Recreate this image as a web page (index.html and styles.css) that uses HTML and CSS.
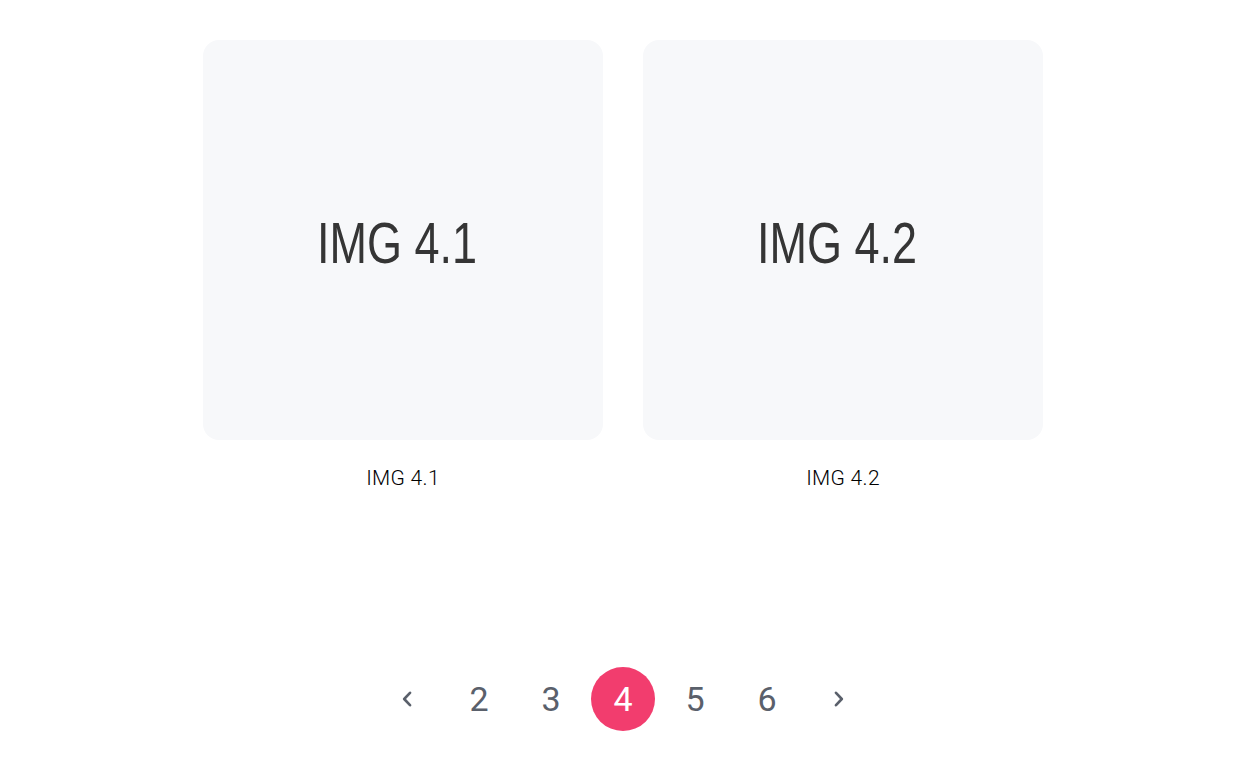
FILE: index.html
```html
<!DOCTYPE html>
<html lang="en">
<head>
<meta charset="utf-8">
<title>Gallery</title>
<link rel="stylesheet" href="styles.css">
</head>
<body>
<main class="page">
  <section class="gallery">
    <figure class="item">
      <div class="thumb"><span class="thumb-label">IMG 4.1</span></div>
      <figcaption class="caption">IMG 4.1</figcaption>
    </figure>
    <figure class="item">
      <div class="thumb"><span class="thumb-label">IMG 4.2</span></div>
      <figcaption class="caption">IMG 4.2</figcaption>
    </figure>
  </section>
  <nav class="pager">
    <button class="page-btn arrow" aria-label="Previous">
      <svg width="10" height="16" viewBox="0 0 10 16"><polyline points="8,1.8 2.2,8 8,14.2" fill="none" stroke="currentColor" stroke-width="2.6" stroke-linecap="round" stroke-linejoin="round"/></svg>
    </button>
    <button class="page-btn">2</button>
    <button class="page-btn">3</button>
    <button class="page-btn active">4</button>
    <button class="page-btn">5</button>
    <button class="page-btn">6</button>
    <button class="page-btn arrow" aria-label="Next">
      <svg width="10" height="16" viewBox="0 0 10 16"><polyline points="2,1.8 7.8,8 2,14.2" fill="none" stroke="currentColor" stroke-width="2.6" stroke-linecap="round" stroke-linejoin="round"/></svg>
    </button>
  </nav>
</main>
</body>
</html>
```
FILE: styles.css
```css
html, body {
  margin: 0;
  padding: 0;
  background: #ffffff;
}
body {
  font-family: Roboto, "Noto Sans", sans-serif;
  color: #111;
}
.page {
  display: flex;
  flex-direction: column;
  align-items: center;
  padding-top: 40px;
}
.gallery {
  display: flex;
  gap: 40px;
  justify-content: center;
}
.item {
  margin: 0;
  display: flex;
  flex-direction: column;
  align-items: center;
}
.thumb {
  width: 400px;
  height: 400px;
  border-radius: 16px;
  background: #f7f8fa;
  display: flex;
  align-items: center;
  justify-content: center;
}
.thumb-label {
  font-family: "Liberation Sans", Arial, sans-serif;
  font-size: 45px;
  line-height: 1;
  color: #353535;
  transform: translate(-6px, 3px) scaleY(1.28);
  filter: blur(0.4px);
  white-space: nowrap;
}
.caption {
  margin-top: 26px;
  font-size: 21px;
  line-height: 24px;
  font-weight: 300;
  letter-spacing: 0.3px;
  color: #000;
}
.pager {
  margin-top: 177px;
  display: flex;
  gap: 8px;
  align-items: center;
}
.page-btn {
  width: 64px;
  height: 64px;
  border: none;
  border-radius: 50%;
  background: transparent;
  font-family: Roboto, sans-serif;
  font-size: 34px;
  font-weight: 400;
  color: #5a606b;
  display: flex;
  align-items: center;
  justify-content: center;
  padding: 0;
  cursor: pointer;
}
.page-btn.arrow svg {
  display: block;
}
.page-btn.active {
  background: #f23d6e;
  color: #ffffff;
}
```
